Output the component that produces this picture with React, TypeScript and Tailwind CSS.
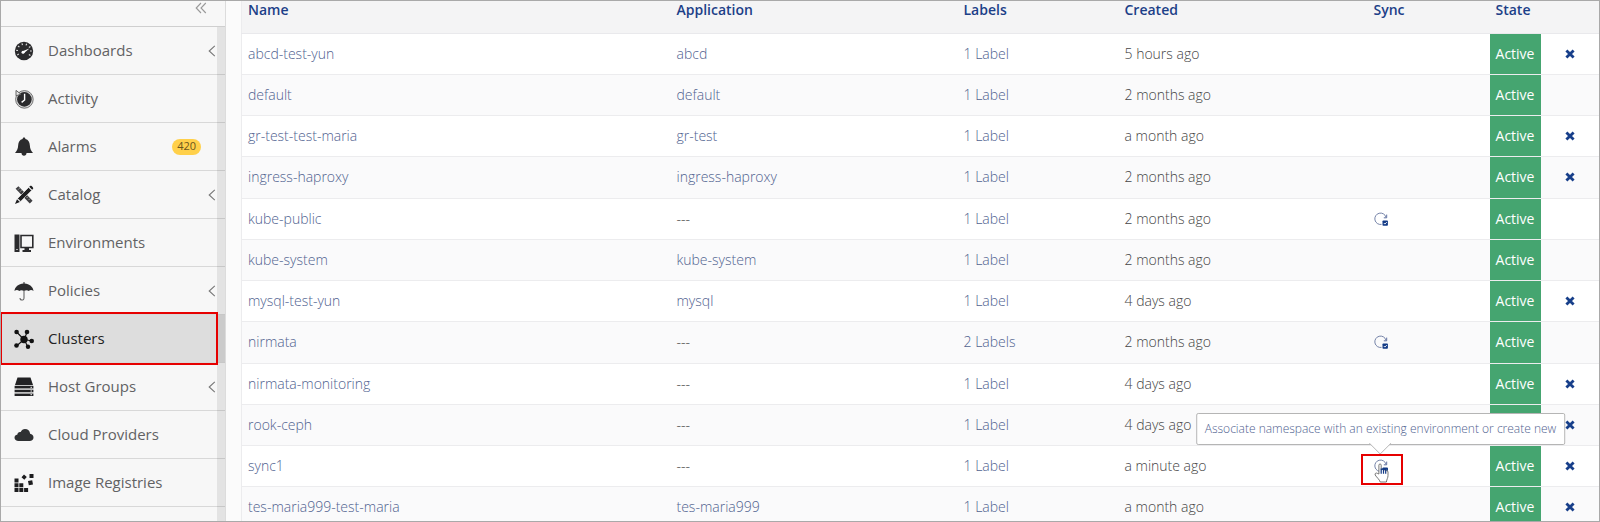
import type { ReactNode } from "react";

type NavItem = { label: string; icon: ReactNode; badge?: string; expandable?: boolean; active?: boolean };

const gaugeTicks = [150, 185, 220, 255, 290, 325, 0, 35];

const nav: NavItem[] = [
  {
    label: "Dashboards",
    expandable: true,
    icon: (
      <>
        <circle cx="10" cy="10" r="9.2" fill="#2b2b2d" />
        {gaugeTicks.map((a) => (
          <path key={a} d="M16 10h1.8" stroke="#ddd" strokeWidth="1.2" transform={`rotate(${a} 10 10)`} />
        ))}
        <path d="M8.5 10.2 15.4 7.4 9.6 12.4z" fill="#fff" />
        <circle cx="9" cy="11.2" r="1.5" fill="#fff" />
      </>
    ),
  },
  {
    label: "Activity",
    icon: (
      <>
        <circle cx="10.4" cy="10.4" r="8.8" fill="#d8d8d8" stroke="#666" strokeWidth=".9" />
        <circle cx="10.4" cy="10.4" r="7.3" fill="#2b2b2d" />
        <path d="M2 1.4v5.4l5-1.6z" fill="#e4e4e4" stroke="#555" strokeWidth=".9" />
        <path d="M10.6 4.8v6.2l-3 2.4" fill="none" stroke="#fff" strokeWidth="1.4" />
      </>
    ),
  },
  {
    label: "Alarms",
    badge: "420",
    icon: (
      <path
        d="M10 .6c.9 0 1.4.6 1.4 1.5 3 .7 4.2 3 4.400 6 .2 3.600 1.100 5.600 3.200 7.900H12.500c0 1.700-1.100 2.800-2.500 2.800S7.500 17.700 7.500 16H1c2.100-2.300 3-4.300 3.200-7.900.2-3 1.400-5.300 4.400-6C8.600 1.200 9.100.6 10 .6z"
        fill="#2b2b2d"
      />
    ),
  },
  {
    label: "Catalog",
    expandable: true,
    icon: (
      <>
        <path d="M1.600 3.800 4.400 1.200 18.600 15.800 15.800 18.600z" fill="#3f3f42" />
        <path d="M5.600 3.200 4.200 4.600M7.600 5.200 6.200 6.600M14 11.600l-1.400 1.400M16 13.600 14.600 15" stroke="#bbb" strokeWidth=".8" />
        <path d="M3.600 13.400 14.600 2.400l3 3-11 11z" fill="#1e1e20" stroke="#f7f7f7" strokeWidth=".6" />
        <path d="M15.200 1.800 16.400.8c.8-.7 3.500 1.900 2.800 2.800l-1 1.200zM3 14.200 1 19l4.900-2z" fill="#1e1e20" />
      </>
    ),
  },
  {
    label: "Environments",
    icon: (
      <>
        <path d="M.5 1.500h5v17.500h-5z" fill="#2b2b2d" />
        <path d="M2 16.500h2" stroke="#aaa" />
        <path d="M7 2.500h11.800v12H7z" fill="#f7f7f7" stroke="#2b2b2d" strokeWidth="1.600" />
        <path d="M10.500 15h4.500v2h2v2H8.500v-2h2z" fill="#2b2b2d" />
      </>
    ),
  },
  {
    label: "Policies",
    expandable: true,
    icon: (
      <>
        <path d="M9.500 1h1v1.600c5 .3 8.700 3.400 9 7.400-1.400-1.300-3.300-1.400-4.700 0-1.300-1.100-3.200-1.100-4.800 0-1.600-1.100-3.500-1.100-4.800 0-1.400-1.400-3.300-1.300-4.700 0 .3-4 4-7.100 9-7.400z" fill="#2b2b2d" />
        <path d="M10 9.500v7.500c0 2.800-4 2.600-4 0" fill="none" stroke="#666" strokeWidth="1.100" />
      </>
    ),
  },
  {
    label: "Clusters",
    active: true,
    icon: (
      <>
        <path d="m10 10.500-7.400-7.500M10 10.500l3-7M10 10.500l8.500 1.500M10 10.500l4 7.500M10 10.500 2.500 17" stroke="#111" strokeWidth="1.100" />
        <circle cx="10" cy="10.500" r="3.700" fill="#111" />
        <circle cx="2.600" cy="3" r="2.300" fill="#111" />
        <circle cx="13" cy="3" r="2.300" fill="#111" />
        <circle cx="17.700" cy="12" r="2.300" fill="#111" />
        <circle cx="14" cy="17.700" r="2.200" fill="#111" />
        <circle cx="2.500" cy="16.500" r="2.300" fill="#111" />
      </>
    ),
  },
  {
    label: "Host Groups",
    expandable: true,
    icon: (
      <>
        <path d="M3.500.5h13l2.500 7.500H1zM.6 9h18.800v2.600H.6zM.6 12.700h18.800v2.600H.6zM.6 16.400h18.800V19H.6z" fill="#222224" />
        <path d="M.8 8.500h18.400M.8 12.200h18.400M.8 15.900h18.400" stroke="#bbb" strokeWidth=".9" />
        <path d="M16.500 10.300h1.500M16.500 14h1.500M16.500 17.700h1.500" stroke="#eee" />
      </>
    ),
  },
  {
    label: "Cloud Providers",
    icon: (
      <path
        d="M4.500 16C2.200 16 .5 14.600.5 12.700c0-1.700 1.200-2.900 2.900-3.200C3.500 7.500 5 6.600 6.700 7c.9-1.900 2.300-2.900 4.300-2.900 2.900 0 4.900 1.900 5.100 4.600 2 .3 3.400 1.700 3.400 3.700 0 2.100-1.600 3.600-3.900 3.600z"
        fill="#2f3133"
      />
    ),
  },
  {
    label: "Image Registries",
    icon: (
      <path
        d="M.5 5.500h4v4h-4zM.5 10.300h4v4h-4zM.5 15.100h4v4h-4zM5.300 10.300h4v4h-4zM5.300 15.100h4v4h-4zM10.100 15.100h4v4h-4zM15.500 1h4v4h-4zM10 1.500l2.800 2.500-2.500 2.800L7.500 4.200zM14 8l4.200-.8.8 4.200-4.200.8z"
        fill="#1d1d1f"
      />
    ),
  },
];

type Row = { name: string; app: string; labels: string; created: string; sync?: "icon" | "hover"; removable?: boolean };

const rows: Row[] = [
  { name: "abcd-test-yun", app: "abcd", labels: "1 Label", created: "5 hours ago", removable: true },
  { name: "default", app: "default", labels: "1 Label", created: "2 months ago" },
  { name: "gr-test-test-maria", app: "gr-test", labels: "1 Label", created: "a month ago", removable: true },
  { name: "ingress-haproxy", app: "ingress-haproxy", labels: "1 Label", created: "2 months ago", removable: true },
  { name: "kube-public", app: "---", labels: "1 Label", created: "2 months ago", sync: "icon" },
  { name: "kube-system", app: "kube-system", labels: "1 Label", created: "2 months ago" },
  { name: "mysql-test-yun", app: "mysql", labels: "1 Label", created: "4 days ago", removable: true },
  { name: "nirmata", app: "---", labels: "2 Labels", created: "2 months ago", sync: "icon" },
  { name: "nirmata-monitoring", app: "---", labels: "1 Label", created: "4 days ago", removable: true },
  { name: "rook-ceph", app: "---", labels: "1 Label", created: "4 days ago", removable: true },
  { name: "sync1", app: "---", labels: "1 Label", created: "a minute ago", sync: "hover", removable: true },
  { name: "tes-maria999-test-maria", app: "tes-maria999", labels: "1 Label", created: "a month ago", removable: true },
];

function SyncIcon() {
  return (
    <svg viewBox="0 0 14 14" className="size-[14px]" fill="none" aria-hidden="true">
      <path d="M7.500 12.400A5.700 5.700 0 1 1 12 5.200" stroke="#7583a8" strokeWidth="1" />
      <path d="M12.700 2.600v3.200H9.800" stroke="#5f70a0" strokeWidth="1" />
      <rect x="8.500" y="8.400" width="5.400" height="5.400" rx=".8" fill="#123a86" />
      <path d="m9.800 11 1.100 1.100 1.900-2" stroke="#fff" strokeWidth=".9" />
    </svg>
  );
}

function HandCursor() {
  return (
    <svg viewBox="0 0 15 20" className="pointer-events-none absolute left-[11px] top-[7px] h-5 w-[15px]" aria-hidden="true">
      <path
        d="M4.900 11V2.200c0-1.700 2.300-1.700 2.300 0V7c.4-.8 2-.7 2.200.4.500-.7 2-.6 2.200.5.700-.6 2.400-.3 2.400 1.100v3.600c0 2.400-1.200 3.400-1.600 6.400H6.200C5.600 16.600 2.800 14.600 1.200 12c-.8-1.600 1.200-2.500 2.200-1.600z"
        fill="#fff"
        stroke="#666"
        strokeWidth=".9"
      />
      <path d="M7.200 5.500v5.300M9.500 6v4.800M11.700 6v4.800M7.200 6.200H14" stroke="#123a86" strokeWidth="1.200" />
    </svg>
  );
}

function RemoveIcon() {
  return (
    <svg viewBox="0 0 10 10" className="size-[10px]" aria-hidden="true">
      <path d="M1.400 1.400 8.600 8.600M8.600 1.400 1.400 8.600" stroke="#173f8a" strokeWidth="2.800" />
    </svg>
  );
}

function Sidebar() {
  return (
    <aside className="relative w-[225px] shrink-0 border-r border-[#dcdcdc] bg-[#f7f7f7]">
      <div className="flex h-[26px] justify-end border-b border-[#cfcfcf] pr-[18px]">
        <button aria-label="Collapse menu" className="flex h-[14px] items-center">
          <svg viewBox="0 0 12 12" className="size-3" fill="none" stroke="#999" strokeWidth="1.100">
            <path d="M6 1 1.200 6 6 11M10.800 1 6 6l4.800 5" />
          </svg>
        </button>
      </div>
      <nav>
        {nav.map((n) => (
          <a
            key={n.label}
            href="#"
            className={
              n.active
                ? "relative flex h-12 items-center border-b border-[#d8d8d8] bg-[#dddddd] pl-[13px] text-[15px] text-[#222]"
                : "relative flex h-12 items-center border-b border-[#d8d8d8] pl-[13px] text-[15px] text-[#626264]"
            }
          >
            <svg viewBox="0 0 20 20" className="size-5" aria-hidden="true">{n.icon}</svg>
            <span className="ml-[14px] flex-1">{n.label}</span>
            {n.badge && (
              <span className="mr-6 flex h-4 items-center rounded-full bg-[#ffd04a] px-[5px] text-[11px] text-[#6b561c]">{n.badge}</span>
            )}
            {n.expandable && (
              <svg viewBox="0 0 8 12" className="relative z-10 mr-[9px] h-3 w-2" fill="none" stroke="#777" strokeWidth="1.100" aria-hidden="true">
                <path d="M6.800.8 1.200 6l5.600 5.200" />
              </svg>
            )}
            {n.active && <span className="absolute -bottom-[3px] -top-[3px] -left-px right-[7px] z-20 border-2 border-[#e60000]" />}
          </a>
        ))}
      </nav>
      <div className="absolute bottom-0 right-0 top-[26px] w-2 bg-black/[0.08]" />
    </aside>
  );
}

export default function App() {
  return (
    <div className="h-screen overflow-hidden border border-[#a9a9a9] bg-[#fbfbfb] font-['Open_Sans',sans-serif]">
      <div className="flex min-h-full">
        <Sidebar />
        <main className="min-w-0 flex-1 pl-[15px]">
          <table className="w-full table-fixed border-l border-[#ececee] bg-white text-left text-sm font-light">
            <colgroup>
              <col className="w-[429px]" />
              <col className="w-[287px]" />
              <col className="w-[161px]" />
              <col className="w-[249px]" />
              <col className="w-[122px]" />
              <col className="w-[51px]" />
              <col />
            </colgroup>
            <thead>
              <tr className="h-8 border-b border-[#e9e9ec] bg-[#f4f4f5] text-[#1c3f88]">
                {["Name", "Application", "Labels", "Created", "Sync", "State"].map((h) => (
                  <th key={h} className="px-[6px] pb-[14px] font-semibold leading-4">{h}</th>
                ))}
                <td />
              </tr>
            </thead>
            <tbody>
              {rows.map((r) => (
                <tr key={r.name} className="h-[41px] border-b border-[#ececee] text-[#50628f] even:bg-[#fafafb] [&:nth-child(4n)]:h-[42px]">
                  <td className="px-[6px]"><a href="#">{r.name}</a></td>
                  <td className="px-[6px]">{r.app === "---" ? <span className="text-[#444]">---</span> : <a href="#">{r.app}</a>}</td>
                  <td className="px-[6px]"><a href="#">{r.labels}</a></td>
                  <td className="px-[6px] text-[#444]">{r.created}</td>
                  <td className="px-[6px]">
                    {r.sync === "icon" && <button aria-label="Sync namespace" className="flex"><SyncIcon /></button>}
                    {r.sync === "hover" && (
                      <div className="relative flex">
                        <button aria-label="Associate namespace" className="flex"><SyncIcon /></button>
                        <div className="absolute -left-[13px] -top-[5px] h-[31px] w-[42px] border-2 border-[#e60000]"><HandCursor /></div>
                        <div role="tooltip" className="absolute bottom-[28px] left-[7px] z-10 -translate-x-1/2 whitespace-nowrap rounded-xs border border-[#b5b5b5] bg-white px-2 py-[6px] text-xs leading-[18px] text-[#50628f]">
                          Associate namespace with an existing environment or create new
                          <svg viewBox="0 0 22 12" className="absolute -bottom-[11px] left-1/2 h-3 w-[22px] -translate-x-1/2" aria-hidden="true">
                            <path d="M0 0 11 11 22 0" fill="#fff" stroke="#b5b5b5" />
                          </svg>
                        </div>
                      </div>
                    )}
                  </td>
                  <td className="bg-[#45a570] text-center font-normal text-white">Active</td>
                  <td className="pl-6">{r.removable && <button aria-label={`Remove ${r.name}`} className="flex"><RemoveIcon /></button>}</td>
                </tr>
              ))}
            </tbody>
          </table>
        </main>
      </div>
    </div>
  );
}
